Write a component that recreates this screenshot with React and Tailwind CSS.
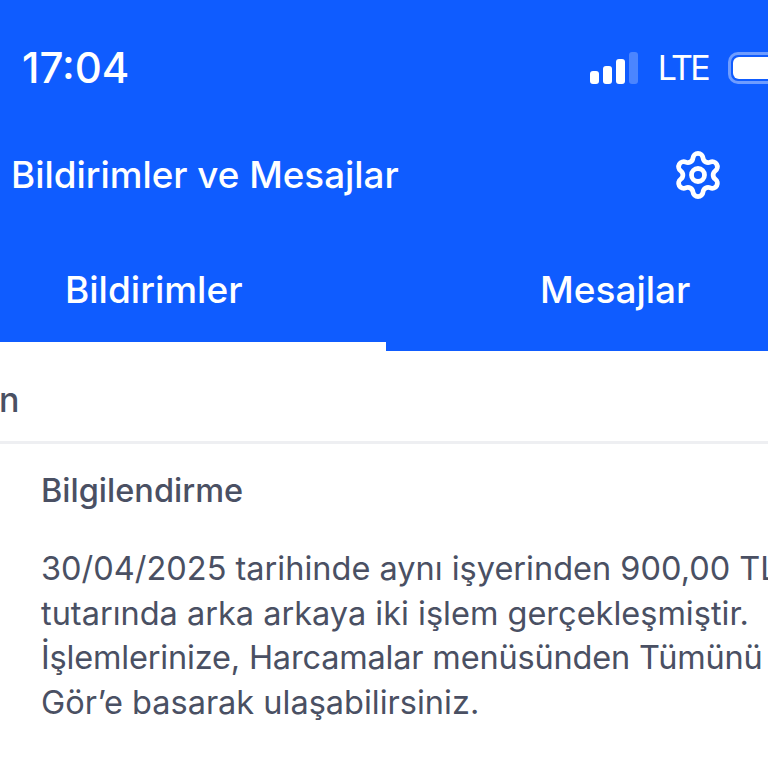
import { Settings } from "lucide-react";

const lines = [
  { text: "30/04/2025 tarihinde aynı işyerinden 900,00 TL", cls: "" },
  { text: "tutarında arka arkaya iki işlem gerçekleşmiştir.", cls: "" },
  { text: "İşlemlerinize, Harcamalar menüsünden Tümünü", cls: "tracking-[-0.18px]" },
  { text: "Gör’e basarak ulaşabilirsiniz.", cls: "" },
];

export default function App() {
  return (
    <div className="w-[768px] h-[768px] overflow-hidden bg-white font-['Inter',sans-serif]">
      {/* Header */}
      <header className="bg-[#0f5cff] text-white h-[351px] flex flex-col">
        <div className="flex items-center justify-between pt-[42px] pl-[22px] h-[94px]">
          <span className="text-[42px] leading-[52px] font-medium">17:04</span>
          <div className="flex items-center">
            <div className="flex items-end gap-[4px] h-[32px]">
              <div className="w-[9px] h-[13px] rounded-[3px] bg-white"></div>
              <div className="w-[9px] h-[18px] rounded-[3px] bg-white"></div>
              <div className="w-[9px] h-[25px] rounded-[3px] bg-white"></div>
              <div className="w-[9px] h-[32px] rounded-[3px] bg-white/25"></div>
            </div>
            <span className="ml-[20px] text-[34px] leading-[40px] tracking-[-0.08em]">LTE</span>
            <div className="ml-[20px] w-[40px] h-[32px] rounded-l-[10px] border-[3px] border-r-0 border-white/40 p-[2px] pr-0">
              <div className="w-full h-full rounded-l-[6px] bg-white"></div>
            </div>
          </div>
        </div>
        <div className="flex items-center justify-between pl-[11px] pr-[44px] mt-[55px] h-[52px]">
          <h1 className="text-[36.8px] leading-[52px] font-medium whitespace-nowrap">Bildirimler ve Mesajlar</h1>
          <Settings className="w-[52px] h-[52px]" strokeWidth={2.2} />
        </div>
        <div className="flex flex-1 mt-[16px] text-[37px] leading-[44px] font-medium">
          <div className="w-[386px] border-b-[9px] border-white pl-[65px] pt-[51px]">Bildirimler</div>
          <div className="flex-1 pl-[154px] pt-[51px]">Mesajlar</div>
        </div>
      </header>

      {/* Filter row */}
      <div className="h-[93px] border-b-[3px] border-[#eeeff2] flex items-center pt-[6px] text-[34px] font-medium text-[#4a5063]">
        <span className="-ml-[1px]">n</span>
      </div>

      {/* Message */}
      <div className="pl-[41px] pt-[25px] text-[#4a5063] whitespace-nowrap">
        <h2 className="text-[32.5px] leading-[44px] font-medium">Bilgilendirme</h2>
        <div className="mt-[34px]">
          {lines.map((line) => (
            <p key={line.text} className={`text-[32.5px] leading-[44.5px] ${line.cls}`}>{line.text}</p>
          ))}
        </div>
      </div>
    </div>
  );
}
